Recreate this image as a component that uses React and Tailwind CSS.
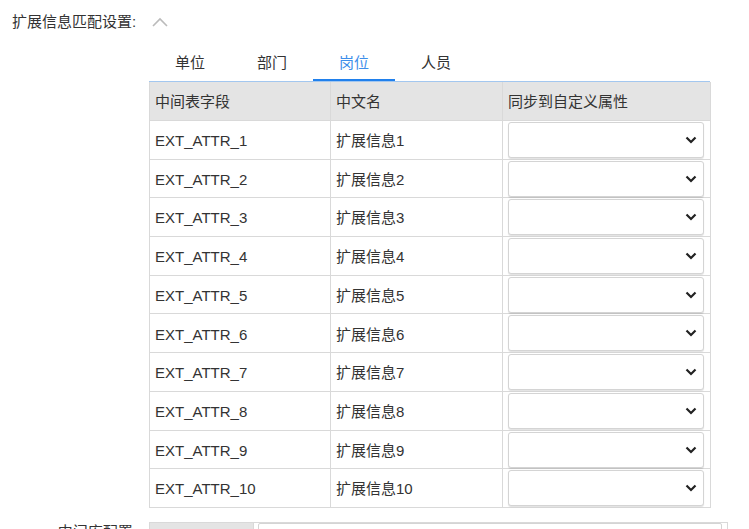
import React, { useState } from 'react';

const tabs = ['单位', '部门', '岗位', '人员'];

const rows = Array.from({ length: 10 }, (_, i) => ({
  field: `EXT_ATTR_${i + 1}`,
  name: `扩展信息${i + 1}`,
}));

const ChevronDown = () => (
  <svg width="12" height="8" viewBox="0 0 12 8" className="pointer-events-none absolute right-[6px] top-1/2 -translate-y-1/2">
    <path d="M1.5 1.5 L6 6 L10.5 1.5" fill="none" stroke="#222" strokeWidth="2.2" />
  </svg>
);

const ChevronUp = () => (
  <svg width="16" height="10" viewBox="0 0 16 10">
    <path d="M1 9 L8 2 L15 9" fill="none" stroke="#bbb" strokeWidth="1.6" />
  </svg>
);

export default function App() {
  const [activeTab, setActiveTab] = useState(2);

  return (
    <div
      className="min-h-screen bg-white text-[15px] text-[#333]"
      style={{ fontFamily: '"Liberation Sans", "Noto Sans CJK SC", sans-serif' }}
    >
      {/* Title */}
      <div className="flex items-center pl-[12px] pt-[12px] h-[32px]">
        <span className="leading-[20px]">扩展信息匹配设置:</span>
        <span className="ml-[16px] flex items-center">
          <ChevronUp />
        </span>
      </div>

      {/* Tabs */}
      <div className="ml-[149px] mt-[14px] w-[561px] flex border-b border-[#a3c7ef]">
        {tabs.map((t, i) => (
          <button
            key={t}
            onClick={() => setActiveTab(i)}
            className={
              i === activeTab
                ? 'w-[82px] h-[35px] pt-[1px] flex items-center justify-center text-[#3d8eea] border-b-2 border-[#2080ec]'
                : 'w-[82px] h-[35px] pt-[1px] flex items-center justify-center text-[#333] border-b-2 border-transparent'
            }
          >
            {t}
          </button>
        ))}
      </div>

      {/* Table */}
      <div className="ml-[149px] w-[561px] border-l border-[#d9d9d9]">
        <div className="grid grid-cols-[181px_172px_208px] bg-[#e4e4e4]">
          <div className="h-[39px] flex items-center pl-[5px] pt-[2px] border-r border-b border-[#d9d9d9]">中间表字段</div>
          <div className="h-[39px] flex items-center pl-[5px] pt-[2px] border-r border-b border-[#d9d9d9]">中文名</div>
          <div className="h-[39px] flex items-center pl-[5px] pt-[2px] border-r border-b border-[#d9d9d9]">同步到自定义属性</div>
        </div>
        {rows.map((r) => (
          <div key={r.field} className="grid grid-cols-[181px_172px_208px]">
            <div className="h-[38.7px] flex items-center pl-[5px] pt-[3px] border-r border-b border-[#d9d9d9]">{r.field}</div>
            <div className="h-[38.7px] flex items-center pl-[5px] pt-[3px] border-r border-b border-[#d9d9d9]">{r.name}</div>
            <div className="h-[38.7px] pl-[5px] pr-[6px] pt-[1px] border-r border-b border-[#d9d9d9]">
              <div className="relative h-[36px] rounded-[3px] border border-[#d4d4d4] bg-white shadow-[0_1px_1px_rgba(0,0,0,0.12)]">
                <ChevronDown />
              </div>
            </div>
          </div>
        ))}
      </div>

      {/* Middle db config */}
      <div className="mt-[14px] flex">
        <div className="w-[149px] pr-[12px] text-right leading-[20px]">中间库配置:</div>
        <div className="w-[579px] h-[36px] flex border border-[#d9d9d9]">
          <div className="w-[104px] bg-[#e4e4e4] border-r border-[#d9d9d9]" />
          <div className="ml-[4px] w-[464px] border border-[#d4d4d4] rounded-[2px] bg-white" />
        </div>
      </div>
    </div>
  );
}
